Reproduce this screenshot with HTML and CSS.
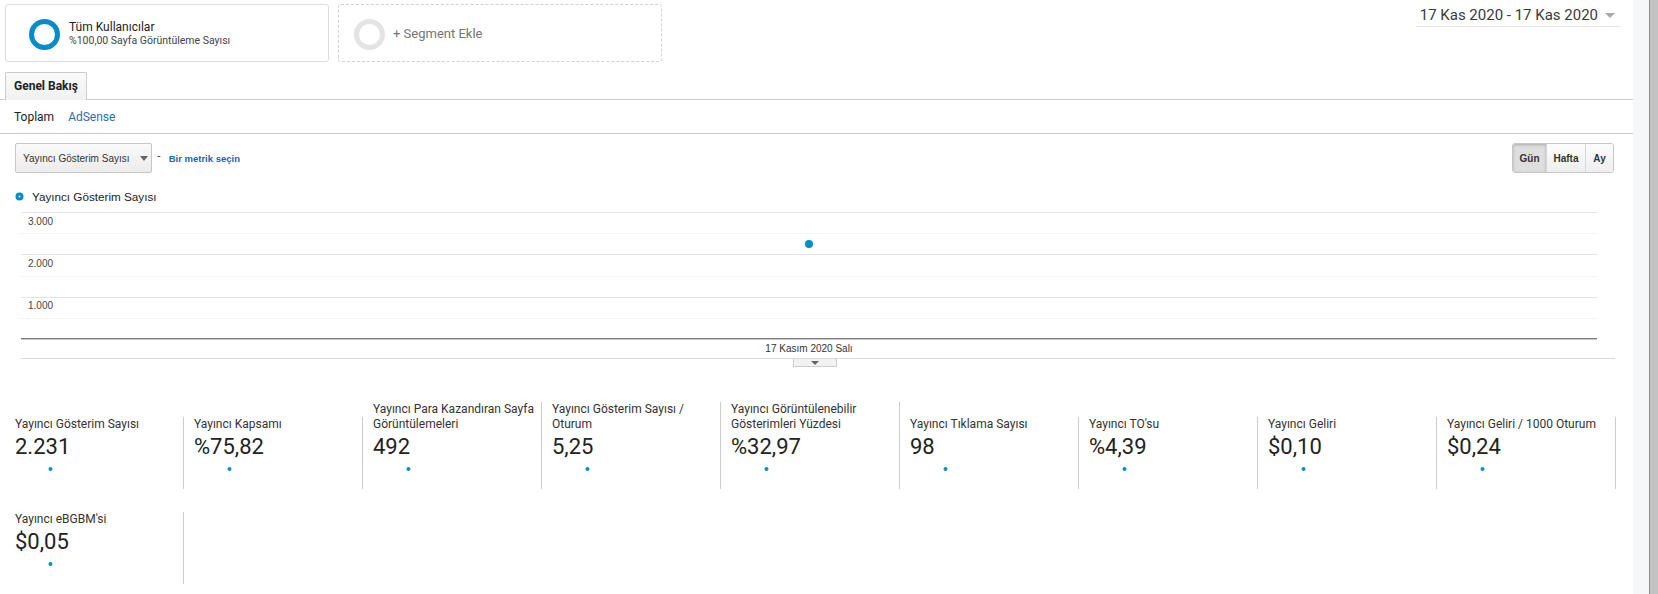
FILE: index.html
```html
<!DOCTYPE html>
<html lang="tr">
<head>
<meta charset="utf-8">
<title>Genel Bakış</title>
<link rel="stylesheet" href="styles.css">
</head>
<body>
<div class="page">
  <main class="main">
    <header class="top">
      <div class="segments">
        <div class="seg seg-active">
          <span class="ring ring-blue"></span>
          <div class="seg-text">
            <div class="seg-title">Tüm Kullanıcılar</div>
            <div class="seg-sub">%100,00 Sayfa Görüntüleme Sayısı</div>
          </div>
        </div>
        <div class="seg seg-add">
          <span class="ring ring-gray"></span>
          <div class="seg-add-text">+ Segment Ekle</div>
        </div>
      </div>
      <div class="date">17 Kas 2020 - 17 Kas 2020<span class="caret"></span></div>
    </header>

    <nav class="tabs"><div class="tab">Genel Bakış</div></nav>
    <div class="subtabs"><span class="subtab">Toplam</span><span class="subtab subtab-link">AdSense</span></div>

    <section class="chart-section">
      <div class="controls">
        <div class="metric-pick">
          <div class="dropdown">Yayıncı Gösterim Sayısı<span class="dd-caret"></span></div>
          <span class="dash">-</span>
          <span class="pick-link">Bir metrik seçin</span>
        </div>
        <div class="btn-group">
          <span class="btn btn-on">Gün</span>
          <span class="btn">Hafta</span>
          <span class="btn">Ay</span>
        </div>
      </div>
      <div class="legend">
        <svg class="legend-dot" width="9" height="9" viewBox="0 0 9 9"><circle cx="4.5" cy="4.5" r="4" fill="#058dc7"/><circle cx="4.5" cy="4.5" r="1" fill="#cfeaf6"/></svg>
        <span>Yayıncı Gösterim Sayısı</span>
      </div>
      <svg class="chart" width="1576" height="128" viewBox="0 0 1576 128">
        <rect x="0" y="0" width="1576" height="1" fill="#e6e6e6"/>
        <rect x="0" y="21" width="1576" height="1" fill="#f3f3f3"/>
        <rect x="0" y="42" width="1576" height="1" fill="#e6e6e6"/>
        <rect x="0" y="64" width="1576" height="1" fill="#f3f3f3"/>
        <rect x="0" y="85" width="1576" height="1" fill="#e6e6e6"/>
        <rect x="0" y="106" width="1576" height="1" fill="#f3f3f3"/>
        <rect x="0" y="126" width="1576" height="1" fill="#7d7d7d"/>
        <rect x="0" y="127" width="1576" height="1" fill="#c8c8c8"/>
        <text class="ylab" x="7" y="13">3.000</text>
        <text class="ylab" x="7" y="55">2.000</text>
        <text class="ylab" x="7" y="97">1.000</text>
        <circle cx="788" cy="32" r="4" fill="#058dc7"/>
      </svg>
      <div class="xlabel">17 Kasım 2020 Salı</div>
      <div class="collapse"><span class="handle"><span class="handle-caret"></span></span></div>
    </section>

    <section class="cards">
      <div class="card"><div class="card-label">Yayıncı Gösterim Sayısı</div><div class="card-value">2.231</div><svg class="spark" width="70" height="29"><circle cx="35.5" cy="9" r="2" fill="#058dc7"/></svg></div>
      <div class="card"><div class="card-label">Yayıncı Kapsamı</div><div class="card-value">%75,82</div><svg class="spark" width="70" height="29"><circle cx="35.5" cy="9" r="2" fill="#058dc7"/></svg></div>
      <div class="card"><div class="card-label">Yayıncı Para Kazandıran Sayfa Görüntülemeleri</div><div class="card-value">492</div><svg class="spark" width="70" height="29"><circle cx="35.5" cy="9" r="2" fill="#058dc7"/></svg></div>
      <div class="card"><div class="card-label">Yayıncı Gösterim Sayısı / Oturum</div><div class="card-value">5,25</div><svg class="spark" width="70" height="29"><circle cx="35.5" cy="9" r="2" fill="#058dc7"/></svg></div>
      <div class="card"><div class="card-label">Yayıncı Görüntülenebilir Gösterimleri Yüzdesi</div><div class="card-value">%32,97</div><svg class="spark" width="70" height="29"><circle cx="35.5" cy="9" r="2" fill="#058dc7"/></svg></div>
      <div class="card"><div class="card-label">Yayıncı Tıklama Sayısı</div><div class="card-value">98</div><svg class="spark" width="70" height="29"><circle cx="35.5" cy="9" r="2" fill="#058dc7"/></svg></div>
      <div class="card"><div class="card-label">Yayıncı TO'su</div><div class="card-value">%4,39</div><svg class="spark" width="70" height="29"><circle cx="35.5" cy="9" r="2" fill="#058dc7"/></svg></div>
      <div class="card"><div class="card-label">Yayıncı Geliri</div><div class="card-value">$0,10</div><svg class="spark" width="70" height="29"><circle cx="35.5" cy="9" r="2" fill="#058dc7"/></svg></div>
      <div class="card"><div class="card-label">Yayıncı Geliri / 1000 Oturum</div><div class="card-value">$0,24</div><svg class="spark" width="70" height="29"><circle cx="35.5" cy="9" r="2" fill="#058dc7"/></svg></div>
      <div class="card"><div class="card-label">Yayıncı eBGBM'si</div><div class="card-value">$0,05</div><svg class="spark" width="70" height="29"><circle cx="35.5" cy="9" r="2" fill="#058dc7"/></svg></div>
    </section>
  </main>
  <div class="gutter"></div>
  <div class="scrollbar"></div>
</div>
</body>
</html>
```

FILE: styles.css
```css
* { box-sizing: border-box; }
html, body { margin: 0; padding: 0; }
body {
  font-family: Roboto, "Noto Sans", "Liberation Sans", sans-serif;
  color: #333;
  background: #f6f7f9;
  overflow: hidden;
}
.page { display: flex; height: 594px; }
.main { width: 1633px; background: #fff; height: 594px; }
.gutter { width: 16px; background: #f6f7f9; }
.scrollbar { width: 9px; background: #c3c3c3; border-left: 1px solid #8e8e8e; }

/* header */
.top { display: flex; justify-content: space-between; align-items: flex-start; padding: 4px 13px 0 5px; }
.segments { display: flex; gap: 9px; }
.seg { width: 324px; height: 58px; border-radius: 3px; display: flex; align-items: center; }
.seg-active { border: 1px solid #ddd; padding-left: 23px; }
.seg-add { border: 1px dashed #d2d2d2; padding-left: 15px; }
.ring { width: 31px; height: 31px; border-radius: 50%; border: 5px solid; flex: none; margin-top: 2px; }
.ring-blue { border-color: #058dc7; }
.ring-gray { border-color: #e4e4e4; }
.seg-text { margin-left: 9px; padding-top: 1px; }
.seg-title { font-size: 12px; line-height: 13px; color: #222; }
.seg-sub { font-size: 10.5px; line-height: 13px; color: #444; }
.seg-add-text { margin-left: 8px; font-size: 13px; color: #757575; }

.date { margin-top: 2px; height: 21px; padding-left: 4px; padding-right: 5px; border-bottom: 1px solid #e5e5e5; font-size: 15px; line-height: 18px; color: #3a3a3a; display: flex; align-items: flex-start; }
.caret { width: 0; height: 0; border-left: 5px solid transparent; border-right: 5px solid transparent; border-top: 5px solid #aaa; margin-left: 7px; margin-top: 7px; }

/* tabs */
.tabs { margin-top: 10px; border-bottom: 1px solid #ccc; padding-left: 5px; height: 28px; display: flex; }
.tab { width: 82px; height: 28px; border: 1px solid #ccc; border-bottom: none; border-radius: 2px 2px 0 0; background: linear-gradient(#fafafa, #f1f1f1); font-size: 12px; font-weight: bold; color: #222; padding-left: 8px; line-height: 27px; }
.subtabs { height: 34px; border-bottom: 1px solid #ccc; padding-left: 14px; font-size: 12px; line-height: 34px; display: flex; gap: 14px; }
.subtab { color: #222; }
.subtab-link { color: #2a6db0; }

/* chart */
.chart-section { padding-top: 9px; }
.controls { display: flex; justify-content: space-between; align-items: center; padding: 0 19px 0 15px; }
.metric-pick { display: flex; align-items: center; font-family: "Liberation Sans", Arial, sans-serif; }
.dropdown { width: 137px; height: 30px; border: 1px solid #c6c6c6; border-radius: 2px; background: linear-gradient(#fafafa, #ececec); font-size: 10px; color: #333; padding-left: 7px; display: flex; align-items: center; }
.dd-caret { width: 0; height: 0; border-left: 4px solid transparent; border-right: 4px solid transparent; border-top: 5px solid #666; margin-left: 10px; }
.dash { margin-left: 5px; font-size: 11px; color: #333; margin-top: -6px; }
.pick-link { margin-left: 8px; font-size: 9.5px; font-weight: bold; color: #1d64b0; }
.btn-group { display: flex; height: 30px; border: 1px solid #c6c6c6; border-radius: 3px; overflow: hidden; font-family: "Liberation Sans", Arial, sans-serif; font-size: 10px; font-weight: bold; color: #333; }
.btn { display: flex; align-items: center; justify-content: center; background: linear-gradient(#fdfdfd, #efefef); border-left: 1px solid #d8d8d8; }
.btn:first-child { border-left: none; width: 33px; }
.btn:nth-child(2) { width: 39px; }
.btn:nth-child(3) { width: 28px; }
.btn-on { background: #dedede; box-shadow: inset 0 1px 3px rgba(0,0,0,0.22); }

.legend { display: flex; align-items: center; margin-top: 16px; padding-left: 15px; height: 14px; color: #222; font-family: "Liberation Sans", Arial, sans-serif; }
.legend-dot { margin-right: 8px; }
.legend span { font-size: 11.7px; }
.chart { display: block; margin: 9px 0 0 21px; }
.ylab { font-family: "Liberation Sans", Arial, sans-serif; font-size: 10px; fill: #444; }
.xlabel { width: 1576px; margin-left: 21px; margin-top: 3px; text-align: center; font-family: "Liberation Sans", Arial, sans-serif; font-size: 10px; line-height: 12px; color: #333; }
.collapse { margin-left: 21px; margin-top: 3px; width: 1594px; border-top: 1px solid #dcdcdc; display: flex; }
.handle { width: 44px; height: 8px; margin-left: 772px; border: 1px solid #cfcfcf; border-top: none; background: #f2f2f2; display: flex; justify-content: center; align-items: center; }
.handle-caret { width: 0; height: 0; border-left: 4px solid transparent; border-right: 4px solid transparent; border-top: 4px solid #666; }

/* scorecards */
.cards { margin-top: 35px; padding-left: 5px; display: flex; flex-wrap: wrap; align-items: flex-end; row-gap: 23px; }
.card { width: 179px; border-right: 1px solid #ccc; padding: 0 0 0 10px; }
.card-label { font-size: 12px; line-height: 15px; color: #333; padding-right: 2px; }
.card-value { font-size: 22px; line-height: 26px; margin-top: 2px; color: #222; }
.spark { display: block; }
```
